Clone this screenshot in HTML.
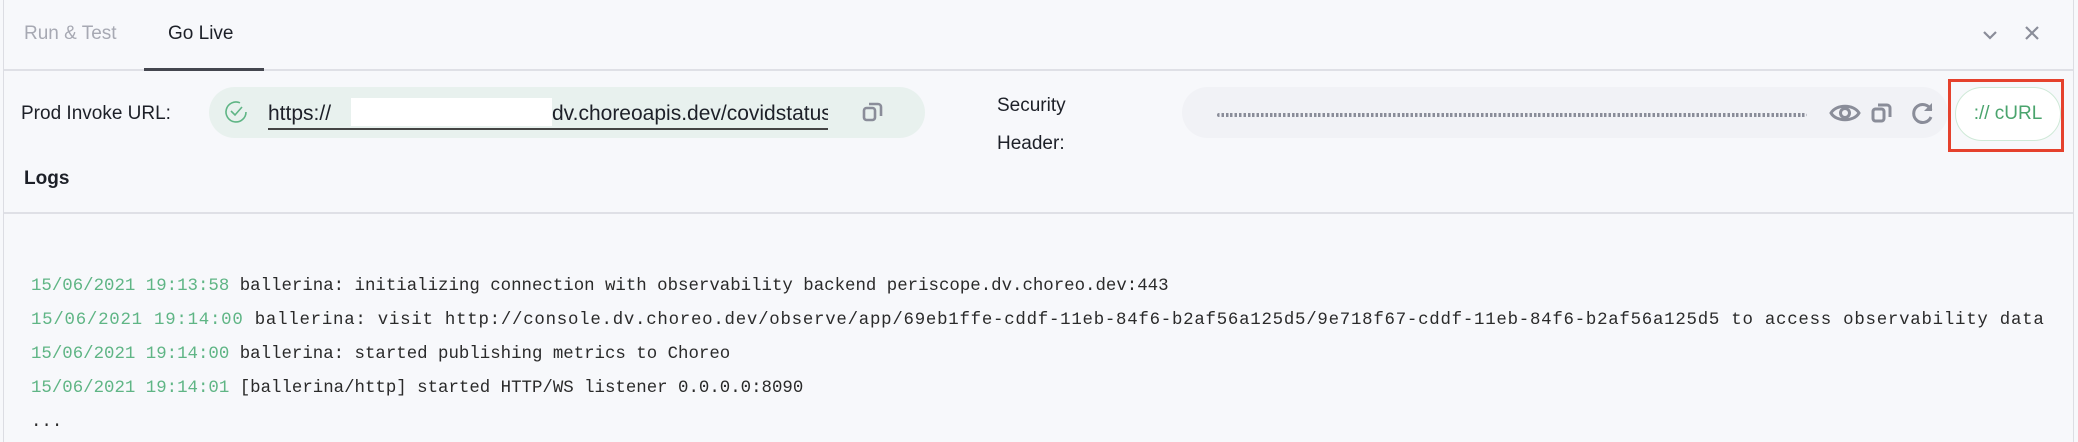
<!DOCTYPE html>
<html><head><meta charset="utf-8"><style>
*{margin:0;padding:0;box-sizing:border-box}
body{width:2078px;height:442px;background:#f7f8fb;position:relative;overflow:hidden;font-family:"Liberation Sans",sans-serif;color:#1d2028}
.a{position:absolute}
.t{font-size:19px;white-space:nowrap}
.log{position:absolute;left:31px;font-family:"Liberation Mono",monospace;font-size:17.4px;white-space:nowrap;color:#2a2a2a}
.log span{color:#5fb585}
</style></head><body>
<div class="a" style="left:3px;top:0;width:1px;height:442px;background:#dcdde3"></div>
<div class="a" style="left:2073px;top:0;width:1px;height:442px;background:#dcdde3"></div>
<div class="a t" style="left:24px;top:23px;color:#a7a9b3">Run &amp; Test</div>
<div class="a t" style="left:168px;top:23px;color:#1d2028">Go Live</div>
<div class="a" style="left:4px;top:69px;width:2069px;height:2px;background:#dfe0e6"></div>
<div class="a" style="left:144px;top:68px;width:120px;height:3px;background:#44464f"></div>
<svg class="a" style="left:1978px;top:25px" width="24" height="20" viewBox="0 0 24 20"><path d="M6 7l6 6 6-6" fill="none" stroke="#8a8d99" stroke-width="2.2"/></svg>
<svg class="a" style="left:2022px;top:23px" width="20" height="20" viewBox="0 0 20 20"><path d="M4 4l12 12M16 4L4 16" fill="none" stroke="#8a8d99" stroke-width="2.2"/></svg>

<div class="a t" style="left:21px;top:103px">Prod Invoke URL:</div>
<div class="a" style="left:209px;top:87px;width:716px;height:51px;border-radius:26px;background:#e8f1ee"></div>
<svg class="a" style="left:222px;top:98px" width="28" height="28" viewBox="0 0 28 28"><path d="M24 14A10 10 0 1 1 18 4.8" fill="none" stroke="#5fb585" stroke-width="1.6"/><path d="M9 13l4 4 7-8" fill="none" stroke="#5fb585" stroke-width="1.6"/></svg>
<div class="a" style="left:268px;top:128px;width:560px;height:1.5px;background:#444"></div>
<div class="a t" style="left:268px;top:102px;font-size:21px">https://</div>
<div class="a t" style="left:552px;top:102px;font-size:21px;width:276px;overflow:hidden">dv.choreoapis.dev/covidstatus</div>
<div class="a" style="left:351px;top:98px;width:201px;height:28px;background:#fff"></div>
<svg class="a" style="left:861px;top:100px" width="24" height="24" viewBox="0 0 24 24"><rect x="3" y="8" width="11" height="12" rx="2.5" fill="none" stroke="#8a8d99" stroke-width="2.6"/><path d="M8 4h9a3 3 0 0 1 3 3v9" fill="none" stroke="#8a8d99" stroke-width="2.6"/></svg>

<div class="a t" style="left:997px;top:95px">Security</div>
<div class="a t" style="left:997px;top:133px">Header:</div>
<div class="a" style="left:1182px;top:87px;width:766px;height:51px;border-radius:26px;background:#f1f2f6"></div>
<div class="a" style="left:1217px;top:113px;width:590px;height:4px;background:repeating-linear-gradient(90deg,#8a8d99 0 2.5px,transparent 2.5px 4.4px);border-radius:2px"></div>
<svg class="a" style="left:1829px;top:101px" width="32" height="24" viewBox="0 0 32 24"><path d="M2 12C7 3 25 3 30 12C25 21 7 21 2 12Z" fill="none" stroke="#8a8d99" stroke-width="3"/><circle cx="16" cy="12" r="4.5" fill="none" stroke="#8a8d99" stroke-width="3"/></svg>
<svg class="a" style="left:1870px;top:101px" width="24" height="24" viewBox="0 0 24 24"><rect x="3" y="8" width="11" height="12" rx="2.5" fill="none" stroke="#8a8d99" stroke-width="3"/><path d="M8 4h9a3 3 0 0 1 3 3v9" fill="none" stroke="#8a8d99" stroke-width="3"/></svg>
<svg class="a" style="left:1910px;top:100px" width="26" height="26" viewBox="0 0 26 26"><path d="M21 10A9 9 0 1 0 21 17" fill="none" stroke="#8a8d99" stroke-width="3"/><path d="M22 3v8h-8z" fill="#8a8d99"/></svg>
<div class="a" style="left:1948px;top:79px;width:116px;height:73px;border:3px solid #e5412d"></div>
<div class="a" style="left:1955px;top:87px;width:106px;height:54px;border-radius:27px;background:#fff;border:1.5px solid #cfe9d8;color:#4aa46d;font-size:19px;text-align:center;line-height:51px">:// cURL</div>

<div class="a t" style="left:24px;top:168px;font-weight:bold;font-size:19px">Logs</div>
<div class="a" style="left:4px;top:212px;width:2069px;height:2px;background:#dfe0e6"></div>

<div class="log" style="top:277px"><span>15/06/2021 19:13:58</span> ballerina: initializing connection with observability backend periscope.dv.choreo.dev:443</div>
<div class="log" style="top:311px;letter-spacing:0.75px"><span>15/06/2021 19:14:00</span> ballerina: visit http://console.dv.choreo.dev/observe/app/69eb1ffe-cddf-11eb-84f6-b2af56a125d5/9e718f67-cddf-11eb-84f6-b2af56a125d5 to access observability data</div>
<div class="log" style="top:345px"><span>15/06/2021 19:14:00</span> ballerina: started publishing metrics to Choreo</div>
<div class="log" style="top:379px"><span>15/06/2021 19:14:01</span> [ballerina/http] started HTTP/WS listener 0.0.0.0:8090</div>
<div class="log" style="top:413px">...</div>
</body></html>
